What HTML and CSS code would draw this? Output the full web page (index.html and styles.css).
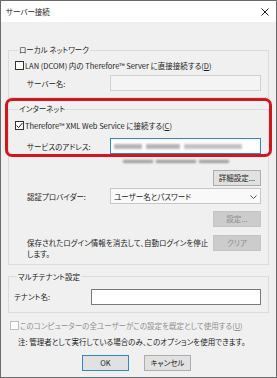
FILE: index.html
```html
<!DOCTYPE html>
<html lang="ja">
<head>
<meta charset="utf-8">
<title>サーバー接続</title>
<link rel="stylesheet" href="styles.css">
</head>
<body>
<div class="dialog">
  <div class="titlebar">
    <span class="title">サーバー接続</span>
    <svg class="close" width="8" height="8" viewBox="0 0 8 8"><path d="M0.5 0.5L7.5 7.5M7.5 0.5L0.5 7.5" stroke="#222" stroke-width="1"/></svg>
  </div>
  <div class="content">
    <fieldset class="group local">
      <legend>ローカル ネットワーク</legend>
      <div class="checkrow">
        <span class="box"></span>
        <span>LAN (DCOM) 内の Therefore™ Server に直接接続する(<u>D</u>)</span>
      </div>
      <div class="field">
        <span class="lbl">サーバー名:</span>
        <span class="input disabled"></span>
      </div>
    </fieldset>

    <fieldset class="group internet">
      <legend>インターネット</legend>
      <div class="checkrow">
        <span class="box checked"><svg width="7" height="7" viewBox="0 0 7 7"><path d="M0.6 3.6L2.6 5.6L6.4 1" fill="none" stroke="#222" stroke-width="1"/></svg></span>
        <span>Therefore™ XML Web Service に接続する(<u>C</u>)</span>
      </div>
      <div class="field">
        <span class="lbl">サービスのアドレス:</span>
        <span class="input focus">
          <span class="blur b1"></span><span class="blur b2"></span><span class="blur b3"></span>
        </span>
      </div>
      <div class="hint">
        <span class="blur h1"></span><span class="blur h2"></span><span class="blur h3"></span>
      </div>
      <div class="btnrow"><span class="btn">詳細設定...</span></div>
      <div class="field combo-row">
        <span class="lbl">認証プロバイダー:</span>
        <span class="combo">ユーザー名とパスワード
          <svg class="arrow" width="7" height="4" viewBox="0 0 7 4"><path d="M0.5 0.5L3.5 3.5L6.5 0.5" fill="none" stroke="#555" stroke-width="1"/></svg>
        </span>
      </div>
      <div class="btnrow set"><span class="btn off">設定...</span></div>
      <div class="clearrow">
        <p class="cleartext">保存されたログイン情報を消去して、自動ログインを停止<br>します。</p>
        <span class="btn off">クリア</span>
      </div>
    </fieldset>

    <fieldset class="group tenant">
      <legend>マルチテナント設定</legend>
      <div class="field">
        <span class="lbl short">テナント名:</span>
        <span class="input white"></span>
      </div>
    </fieldset>

    <div class="checkrow outside off">
      <span class="box"></span>
      <span>このコンピューターの全ユーザーがこの設定を既定として使用する(<u>U</u>)</span>
    </div>
    <p class="note">注: 管理者として実行している場合のみ、このオプションを使用できます。</p>

    <div class="actions">
      <span class="btn default">OK</span>
      <span class="btn">キャンセル</span>
    </div>
  </div>
  <div class="highlight"></div>
</div>
</body>
</html>
```

FILE: styles.css
```css
* { box-sizing: border-box; }
html, body { margin: 0; padding: 0; }
body {
  width: 277px;
  height: 378px;
  overflow: hidden;
  font-family: "Noto Sans CJK JP", "Noto Sans", sans-serif;
  font-size: 7.5px;
  font-feature-settings: "palt";
  color: #222;
  background: #f0f0f0;
}
.dialog {
  position: relative;
  width: 277px;
  height: 378px;
  border: 1px solid #6b6b6b;
  background: #f0f0f0;
}
.titlebar {
  height: 21px;
  background: #ffffff;
  display: flex;
  align-items: center;
  justify-content: space-between;
  padding: 0 7px 0 5px;
}
.title { line-height: 12px; }
.close { display: block; }
.content { padding: 0 7px 0 7px; }

.group {
  margin: 0;
  border: 1px solid #dcdcdc;
  padding: 0 7px 0 6px;
}
.group legend {
  padding: 0 1px;
  margin-left: 3px;
  line-height: 12px;
  height: 12px;
}
.local { margin-top: 22px; padding-bottom: 6px; }
.internet { margin-top: 5px; padding-bottom: 5px; }
.tenant { margin-top: 6px; padding-bottom: 7px; padding-left: 5px; }

.checkrow {
  display: flex;
  align-items: center;
  gap: 1px;
  height: 12px;
  margin-top: 3px;
  white-space: nowrap;
}
.box {
  width: 9px;
  height: 9px;
  border: 1px solid #333;
  background: #fff;
  display: flex;
  align-items: center;
  justify-content: center;
  flex: none;
}
.box svg { display: block; }
u { text-decoration: underline; }

.field {
  display: flex;
  align-items: center;
  margin-top: 4px;
  height: 16px;
}
.lbl { width: 95px; padding-left: 12px; flex: none; white-space: nowrap; }
.lbl.short { width: 77px; padding-left: 0; }
.input {
  flex: 1;
  height: 16px;
  border: 1px solid #7a7a7a;
  background: #fff;
  display: flex;
  align-items: center;
  gap: 4px;
  padding-left: 3px;
}
.input.disabled { background: #f4f4f4; border-color: #d0d0d0; }
.input.focus { border-color: #2f86d6; }
.internet .checkrow { margin-top: 4px; }
.internet .field { margin-top: 7px; }
.tenant .field { margin-top: 6px; }

.blur {
  display: inline-block;
  height: 5px;
  background: #b4b4b4;
  filter: blur(1px);
}
.b1 { width: 28px; }
.b2 { width: 34px; }
.b3 { width: 58px; background: #c2c2c2; }
.hint {
  display: flex;
  gap: 3px;
  padding-left: 108px;
  height: 11px;
  align-items: center;
  margin-top: 2px;
}
.hint .blur { height: 3px; background: #9a9a9a; }
.h1 { width: 30px; }
.h2 { width: 40px; }
.h3 { width: 30px; }

.btnrow { display: flex; justify-content: flex-end; margin-top: 3px; }
.internet .btnrow.set { margin-top: 7px; }
.btn {
  width: 48px;
  height: 16px;
  display: flex;
  align-items: center;
  justify-content: center;
  background: #e1e1e1;
  border: 1px solid #adadad;
  line-height: 12px;
  flex: none;
  white-space: nowrap;
}
.btn.off { background: #cccccc; border-color: #c4c4c4; color: #8c8c8c; }
.btn.default { border-color: #2f86d6; }

.internet .combo-row { margin-top: 2px; }
.combo {
  flex: 1;
  height: 16px;
  border: 1px solid #c8c8c8;
  background: #f9f9f9;
  display: flex;
  align-items: center;
  padding-left: 3px;
  position: relative;
}
.arrow { position: absolute; right: 3px; top: 6px; }

.clearrow {
  display: flex;
  align-items: flex-start;
  justify-content: space-between;
  margin-top: 8px;
}
.cleartext {
  margin: 1.5px 0 0 12px;
  line-height: 11px;
  white-space: nowrap;
}

.outside { margin-top: 7px; padding-left: 2px; }
.outside.off { color: #8f8f8f; }
.outside.off .box { border-color: #c0c0c0; }
.note { margin: 4px 0 0 10px; line-height: 12px; white-space: nowrap; }

.actions {
  display: flex;
  justify-content: center;
  gap: 15px;
  margin-top: 7px;
  padding-right: 4px;
}
.actions .btn { width: 47px; }

.highlight {
  position: absolute;
  left: 4px;
  top: 97px;
  width: 267px;
  height: 59px;
  border: 3px solid #d3161d;
  border-radius: 7px;
}
```
